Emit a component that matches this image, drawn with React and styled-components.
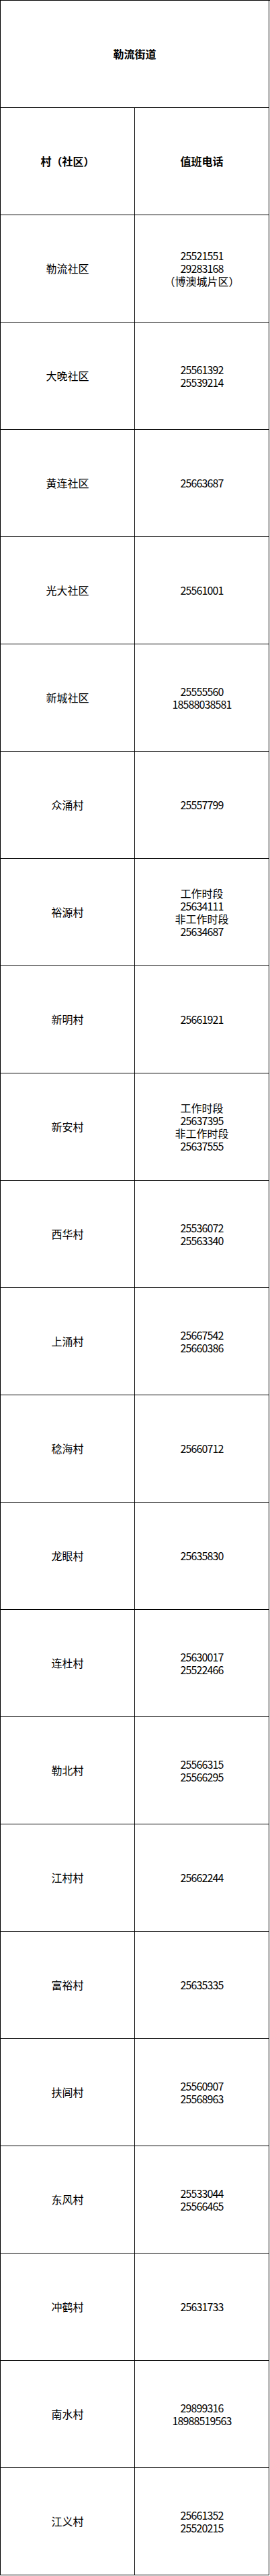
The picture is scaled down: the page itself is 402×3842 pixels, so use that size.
import React from "react";
import styled, { createGlobalStyle } from "styled-components";

const GlobalStyle = createGlobalStyle`
  html, body {
    margin: 0;
    padding: 0;
    background: #fff;
  }
  body {
    font-family: "Noto Sans CJK SC", "Noto Sans", sans-serif;
    color: #000;
  }
`;

const Table = styled.div`
  display: grid;
  grid-template-columns: 200px 200px;
  grid-auto-rows: 160px;
  width: 401px;
  border-top: 1px solid #000;
  border-left: 1px solid #000;
`;

const Cell = styled.div`
  box-sizing: border-box;
  grid-column: ${(p) => (p.$span ? "1 / span 2" : "auto")};
  border-right: 1px solid #000;
  border-bottom: 1px solid #000;
  display: flex;
  flex-direction: column;
  align-items: center;
  justify-content: center;
  text-align: center;
  font-size: 16px;
  line-height: 19px;
  font-weight: ${(p) => (p.$bold ? 700 : 400)};
`;

const Line = styled.span`
  display: block;
  white-space: nowrap;
  letter-spacing: ${(p) => (p.$num ? "-0.9px" : "0")};
`;

const rows = [
  ["勒流社区", ["25521551", "29283168", "（博澳城片区）"]],
  ["大晚社区", ["25561392", "25539214"]],
  ["黄连社区", ["25663687"]],
  ["光大社区", ["25561001"]],
  ["新城社区", ["25555560", "18588038581"]],
  ["众涌村", ["25557799"]],
  ["裕源村", ["工作时段", "25634111", "非工作时段", "25634687"]],
  ["新明村", ["25661921"]],
  ["新安村", ["工作时段", "25637395", "非工作时段", "25637555"]],
  ["西华村", ["25536072", "25563340"]],
  ["上涌村", ["25667542", "25660386"]],
  ["稔海村", ["25660712"]],
  ["龙眼村", ["25635830"]],
  ["连杜村", ["25630017", "25522466"]],
  ["勒北村", ["25566315", "25566295"]],
  ["江村村", ["25662244"]],
  ["富裕村", ["25635335"]],
  ["扶闾村", ["25560907", "25568963"]],
  ["东风村", ["25533044", "25566465"]],
  ["冲鹤村", ["25631733"]],
  ["南水村", ["29899316", "18988519563"]],
  ["江义村", ["25661352", "25520215"]],
];

export default function App() {
  return (
    <>
      <GlobalStyle />
      <Table>
        <Cell $span $bold>
          <Line>勒流街道</Line>
        </Cell>
        <Cell $bold>
          <Line>村（社区）</Line>
        </Cell>
        <Cell $bold>
          <Line>值班电话</Line>
        </Cell>
        {rows.map(([name, phones]) => (
          <React.Fragment key={name}>
            <Cell>
              <Line>{name}</Line>
            </Cell>
            <Cell>
              {phones.map((p, i) => (
                <Line key={i} $num={/^\d+$/.test(p)}>
                  {p}
                </Line>
              ))}
            </Cell>
          </React.Fragment>
        ))}
      </Table>
    </>
  );
}
